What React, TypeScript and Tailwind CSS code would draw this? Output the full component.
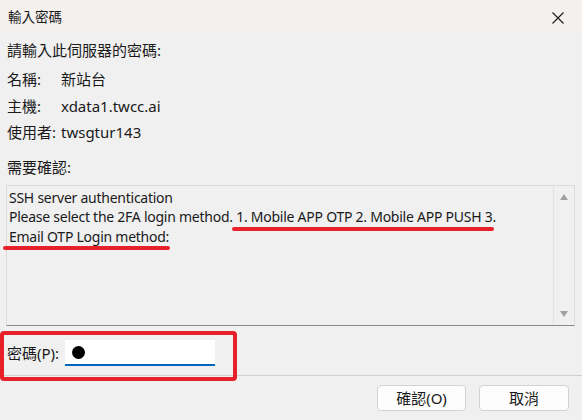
import React from "react";

const font = { fontFamily: '"Noto Sans", "Noto Sans CJK TC", sans-serif' };

export default function App() {
  return (
    <div
      className="relative w-[582px] h-[420px] overflow-hidden bg-[#f0f0f0] text-[#1a1a1a] flex flex-col"
      style={font}
    >
      {/* title bar */}
      <div className="h-[35px] bg-[#f3f0ee] flex items-center justify-between pl-[8px] pr-[16px] shrink-0">
        <span className="text-[13.5px] leading-none">輸入密碼</span>
        <svg width="16" height="16" viewBox="0 0 16 16" className="text-[#1a1a1a]">
          <path d="M2.5 2.5 L13.5 13.5 M13.5 2.5 L2.5 13.5" stroke="currentColor" strokeWidth="1.1" />
        </svg>
      </div>

      {/* info */}
      <div className="pl-[7px] text-[15px] leading-[20px] flex flex-col">
        <div className="mt-[5px]">請輸入此伺服器的密碼:</div>
        <div className="mt-[9px] flex"><span className="w-[54px]">名稱:</span><span>新站台</span></div>
        <div className="mt-[7px] flex"><span className="w-[54px]">主機:</span><span>xdata1.twcc.ai</span></div>
        <div className="mt-[6px] flex"><span className="w-[54px]">使用者:</span><span>twsgtur143</span></div>
        <div className="mt-[15px]">需要確認:</div>
      </div>

      {/* text box */}
      <div className="relative mt-[8px] ml-[6px] w-[569px] h-[141px] border border-[#dcdcdc] border-b-[#8a8a8a] flex">
        <div className="flex-1 pl-[2px] pt-[2px] text-[14px] leading-[19.3px] tracking-[-0.25px]">
          <div>SSH server authentication</div>
          <div>Please select the 2FA login method. 1. Mobile APP OTP 2. Mobile APP PUSH 3.</div>
          <div>Email OTP Login method:</div>
        </div>
        <div className="w-[21px] border-l border-[#e2e2e2] flex flex-col items-center justify-between py-[8px]">
          <svg width="8" height="6" viewBox="0 0 8 6"><path d="M0 6 L4 0 L8 6 Z" fill="#a0a0a0" /></svg>
          <svg width="8" height="6" viewBox="0 0 8 6"><path d="M0 0 L4 6 L8 0 Z" fill="#a0a0a0" /></svg>
        </div>
        {/* red underline annotations */}
        <div className="absolute left-[225px] top-[41px] w-[262px] h-[4px] rounded-full bg-[#e8202a]" />
        <div className="absolute left-[-4px] top-[60px] w-[167px] h-[4px] rounded-full bg-[#e8202a]" />
      </div>

      {/* password row */}
      <div className="relative mt-[5px] h-[45px] border-b border-[#d0d0d0] flex items-center">
        <div className="absolute left-0 top-0 w-[237px] h-[50px] border-[4px] border-[#e8202a] rounded-[4px]" />
        <span className="pl-[7px] text-[15px]">密碼(P):</span>
        <div className="ml-[6px] w-[150px] h-[26px] bg-white border-b-2 border-[#0067c0] flex items-center pl-[7px]">
          <span className="w-[13px] h-[13px] rounded-full bg-black" />
        </div>
      </div>

      {/* buttons */}
      <div className="flex justify-end gap-[13px] pr-[13px] mt-[9px]">
        <button className="w-[89px] h-[26px] bg-[#fdfdfd] border border-[#d3d3d3] rounded-[4px] text-[15px] leading-none">確認(O)</button>
        <button className="w-[90px] h-[26px] bg-[#fdfdfd] border border-[#d3d3d3] rounded-[4px] text-[15px] leading-none">取消</button>
      </div>
    </div>
  );
}
